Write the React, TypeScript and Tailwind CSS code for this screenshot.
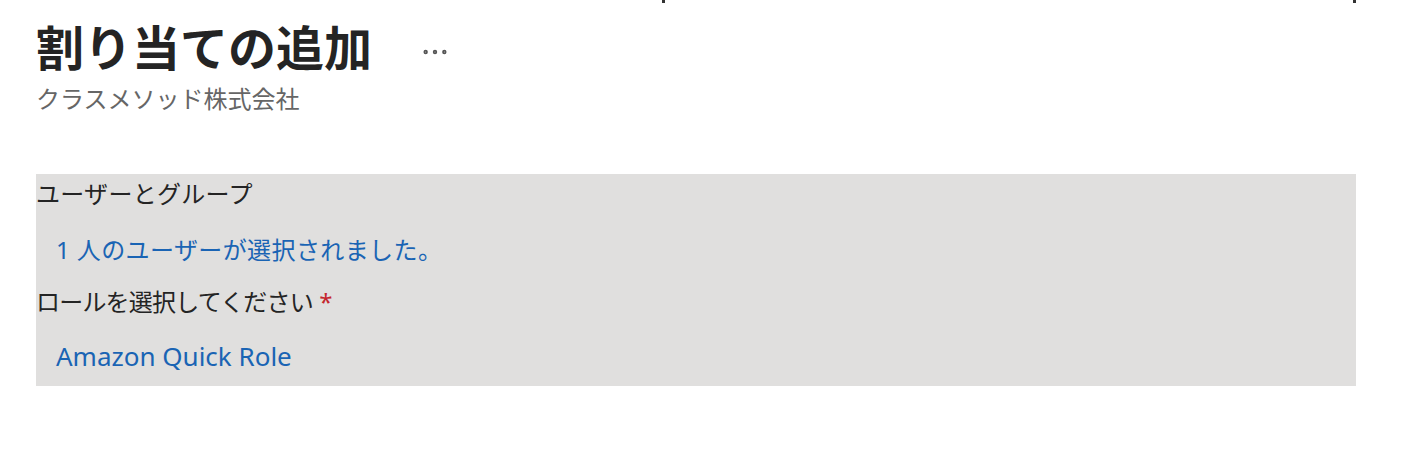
import { MoreHorizontal } from 'lucide-react'

const jp = '[font-family:"Noto_Sans","Noto_Sans_CJK_JP",sans-serif]'

export default function App() {
  return (
    <div className={`min-h-[464px] w-[1408px] bg-white ${jp}`}>
      <div className="flex h-[3px]">
        <div className="ml-[662px] h-[3px] w-[3px] bg-[#333]" />
        <div className="ml-[688px] h-[3px] w-[3px] bg-[#333]" />
      </div>

      <div className="px-[36px] pt-[17px]">
        <div className="flex items-center gap-[47px]">
          <h1 className="text-[48px] font-bold leading-[56px] text-[#242424]">
            割り当ての追加
          </h1>
          <MoreHorizontal className="mt-[8px] h-[32px] w-[32px] text-[#555]" strokeWidth={1.3} />
        </div>
        <div className="mt-[7px] text-[24px] leading-[32px] text-[#666]">クラスメソッド株式会社</div>

        <div className="mt-[59px] w-[1320px] bg-[#e0dfde] pb-[13px] pt-[3px]">
          <div className="text-[24px] leading-[34px] tracking-[0.3px] text-[#242424]">ユーザーとグループ</div>
          <div className="mt-[22px] px-[20px] text-[24px] leading-[34px] tracking-[0.4px] text-[#1a64b4]">
            1 人のユーザーが選択されました。
          </div>
          <div className="mt-[18px] text-[24px] leading-[34px] text-[#242424]">
            <span className="tracking-[-0.8px]">ロールを選択してください</span>{' '}
            <span className="text-[#c4262e]">*</span>
          </div>
          <div className="mt-[20px] px-[20px] text-[26px] leading-[34px] text-[#1a64b4]">
            Amazon Quick Role
          </div>
        </div>
      </div>
    </div>
  )
}
